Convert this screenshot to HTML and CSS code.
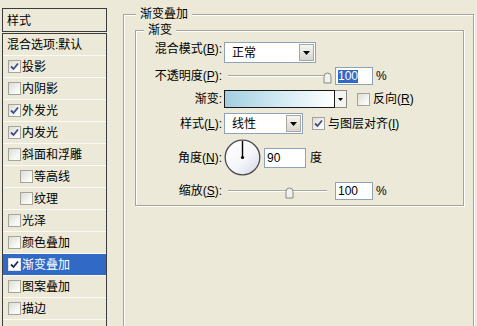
FILE: index.html
```html
<!DOCTYPE html>
<html lang="zh-CN">
<head>
  <meta charset="UTF-8" />
  <title>图层样式 - 渐变叠加</title>
  <link rel="stylesheet" href="styles.css">
</head>
<body>
  <div class="side">
    <div class="side-head">样式</div>
    <div class="side-list">
      <div class="item first">混合选项:默认</div>
      <div class="item"><span class="cb on"><svg viewBox="0 0 11 11"><path d="M2 5.5 L4.5 8 L9 2.5"/></svg></span>投影</div>
      <div class="item"><span class="cb"></span>内阴影</div>
      <div class="item"><span class="cb on"><svg viewBox="0 0 11 11"><path d="M2 5.5 L4.5 8 L9 2.5"/></svg></span>外发光</div>
      <div class="item"><span class="cb on"><svg viewBox="0 0 11 11"><path d="M2 5.5 L4.5 8 L9 2.5"/></svg></span>内发光</div>
      <div class="item"><span class="cb"></span>斜面和浮雕</div>
      <div class="item sub"><span class="cb"></span>等高线</div>
      <div class="item sub"><span class="cb"></span>纹理</div>
      <div class="item"><span class="cb"></span>光泽</div>
      <div class="item"><span class="cb"></span>颜色叠加</div>
      <div class="item active"><span class="cb on"><svg viewBox="0 0 11 11"><path d="M2 5.5 L4.5 8 L9 2.5"/></svg></span>渐变叠加</div>
      <div class="item"><span class="cb"></span>图案叠加</div>
      <div class="item"><span class="cb"></span>描边</div>
    </div>
  </div>

  <div class="main">
    <fieldset class="group outer">
      <legend>渐变叠加</legend>
      <fieldset class="group inner">
        <legend>渐变</legend>
        <div class="form">
          <div class="row">
            <span class="lbl">混合模式(<u>B</u>):</span>
            <div class="combo"><span>正常</span><span class="btn"><svg viewBox="0 0 7 4"><path d="M0 0 H7 L3.5 4 Z"/></svg></span></div>
          </div>
          <div class="row">
            <span class="lbl">不透明度(<u>P</u>):</span>
            <div class="slider">
              <div class="track"></div>
              <svg class="thumb" style="left: 99px" viewBox="0 0 9 12"><path d="M1 4.5 Q1 1 4.5 1 Q8 1 8 4.5 V11 H1 Z"/></svg>
            </div>
            <div class="num"><span class="sel">100</span></div>
            <span class="unit">%</span>
          </div>
          <div class="row">
            <span class="lbl">渐变:</span>
            <div class="swatch"></div>
            <div class="drop"><svg viewBox="0 0 5 3"><path d="M0 0 H5 L2.5 3 Z"/></svg></div>
            <label class="check reverse"><span class="cb"></span><span>反向(<u>R</u>)</span></label>
          </div>
          <div class="row">
            <span class="lbl">样式(<u>L</u>):</span>
            <div class="combo narrow"><span>线性</span><span class="btn"><svg viewBox="0 0 7 4"><path d="M0 0 H7 L3.5 4 Z"/></svg></span></div>
            <label class="check align"><span class="cb on"><svg viewBox="0 0 11 11"><path d="M2 5.5 L4.5 8 L9 2.5"/></svg></span><span>与图层对齐(<u>I</u>)</span></label>
          </div>
          <div class="row">
            <span class="lbl">角度(<u>N</u>):</span>
            <svg class="dial" viewBox="0 0 37 37">
              <defs>
                <linearGradient id="dialFill" x1="0" y1="0" x2="1" y2="1">
                  <stop offset="0" stop-color="#ffffff"/>
                  <stop offset="0.55" stop-color="#f6f6fa"/>
                  <stop offset="1" stop-color="#d4d4e6"/>
                </linearGradient>
              </defs>
              <circle cx="18.5" cy="18.5" r="17.3" fill="url(#dialFill)" stroke="#4a4a50" stroke-width="1.3"/>
              <line x1="18.5" y1="18.5" x2="18.5" y2="2" stroke="#000" stroke-width="1.4"/>
              <circle cx="18.5" cy="18.5" r="1.6" fill="#000"/>
            </svg>
            <div class="num angle">90</div>
            <span class="unit deg">度</span>
          </div>
          <div class="row">
            <span class="lbl">缩放(<u>S</u>):</span>
            <div class="slider">
              <div class="track"></div>
              <svg class="thumb" style="left: 61px" viewBox="0 0 9 12"><path d="M1 4.5 Q1 1 4.5 1 Q8 1 8 4.5 V11 H1 Z"/></svg>
            </div>
            <div class="num">100</div>
            <span class="unit">%</span>
          </div>
        </div>
      </fieldset>
    </fieldset>
  </div>
</body>
</html>
```

FILE: styles.css
```css
* {
  box-sizing: border-box;
}

html, body {
  margin: 0;
  height: 100%;
}

body {
  display: flex;
  padding: 7px 0 0 2px;
  background-color: #ece9d8;
  color: #000;
  font: 12px/14px "Liberation Sans", "Noto Sans CJK SC", sans-serif;
  overflow: hidden;
}

u {
  text-decoration: underline;
  text-underline-offset: 1px;
}

/* liste des styles a gauche */
.side {
  width: 105px;
  margin-top: 1px;
  display: flex;
  flex-direction: column;
}

.side-head {
  height: 24px;
  border: 1px solid #3c3c3c;
  padding: 1px 0 0 4px;
  line-height: 22px;
}

.side-list {
  flex: 1;
  margin-top: 1px;
  border: 1px solid #3c3c3c;
  border-bottom: none;
}

.item {
  height: 22px;
  display: flex;
  align-items: center;
  gap: 1px;
  padding-left: 5px;
  border-bottom: 1px solid #fbfaf3;
}

.item.first { padding-left: 4px; }
.item.sub   { padding-left: 17px; }

.item.active {
  background-color: #316ac5;
  color: white;
}

.cb {
  width: 13px;
  height: 13px;
  flex: none;
  border: 1px solid #a4a49c;
  background: linear-gradient(135deg, #dcdcd4, #f4f4f0 60%, #ffffff);
  display: flex;
  align-items: center;
  justify-content: center;
}

.cb svg {
  width: 11px;
  height: 11px;
  fill: none;
  stroke: #3e4c8a;
  stroke-width: 1.8;
}

.item.active .cb {
  background: #fff;
  border-color: #e0e0e0;
}

.item.active .cb svg { stroke: #1a2a5a; }

/* panneau de droite */
.main {
  margin-left: 16px;
}

.group {
  margin: 0;
  padding: 0;
  min-width: 0;
  border: 1px solid #a5a497;
  box-shadow: 1px 1px 0 #fff, inset 1px 1px 0 #fff;
}

.group legend {
  padding: 0 4px;
  line-height: 14px;
  background-color: #ece9d8;
}

.outer {
  width: 351px;
  height: 322px;
  padding-top: 2px;
}

.outer > legend { margin-left: 12px; }

.inner {
  width: 329px;
  margin-left: 11px;
}

.inner > legend { margin-left: 8px; }

.form {
  display: grid;
  grid-template-rows: 20px 18px 18px 21px 37px 19px;
  row-gap: 5px;
  padding: 5px 0 5px 0;
}

.row {
  display: flex;
  align-items: center;
}

.row:first-child { align-items: flex-start; }

.lbl {
  width: 86px;
  margin-right: 2px;
  text-align: right;
  white-space: nowrap;
}

.combo {
  width: 92px;
  height: 21px;
  flex: none;
  display: flex;
  align-items: center;
  justify-content: space-between;
  padding: 0 1px 0 7px;
  background-color: white;
  border: 1px solid #8fa3b8;
}

.combo.narrow { width: 79px; }

.btn {
  width: 15px;
  height: 17px;
  display: flex;
  align-items: center;
  justify-content: center;
  border: 1px solid #a8a8a0;
  background: linear-gradient(#f6f6f2, #d6d6ce);
}

.btn svg {
  width: 7px;
  height: 4px;
  fill: #000;
}

.slider {
  position: relative;
  width: 108px;
  height: 18px;
  flex: none;
}

.track {
  position: absolute;
  left: 4px;
  right: 5px;
  top: 8px;
  height: 2px;
  border-top: 1px solid #a8a89c;
  border-bottom: 1px solid #fff;
}

.thumb {
  position: absolute;
  top: 5px;
  width: 9px;
  height: 12px;
  fill: #f2f2ec;
  stroke: #8a8a84;
  stroke-width: 1;
}

.num {
  width: 38px;
  height: 18px;
  flex: none;
  margin-left: 3px;
  padding-left: 2px;
  background-color: white;
  border: 1px solid #8fa3b8;
  display: flex;
  align-items: center;
}

.num.angle {
  width: 42px;
  height: 20px;
  margin-left: 3px;
}

.sel {
  background-color: #316ac5;
  color: white;
  line-height: 13px;
}

.unit { margin-left: 3px; }
.unit.deg { margin-left: 4px; }

.swatch {
  width: 111px;
  height: 18px;
  flex: none;
  border: 1px solid #1a1a1a;
  background: linear-gradient(to right, #a3cfe1, #d6ecf3 55%, #ffffff);
}

.drop {
  width: 12px;
  height: 18px;
  flex: none;
  border: 1px solid #8a8a84;
  border-left: none;
  background-color: #f4f4f0;
  display: flex;
  align-items: center;
  justify-content: center;
}

.drop svg {
  width: 5px;
  height: 3px;
  fill: #000;
}

.check {
  display: flex;
  align-items: center;
  gap: 3px;
}

.check.reverse { margin-left: 10px; }
.check.align   { margin-left: 9px; }

.dial {
  width: 37px;
  height: 37px;
  flex: none;
}
```
